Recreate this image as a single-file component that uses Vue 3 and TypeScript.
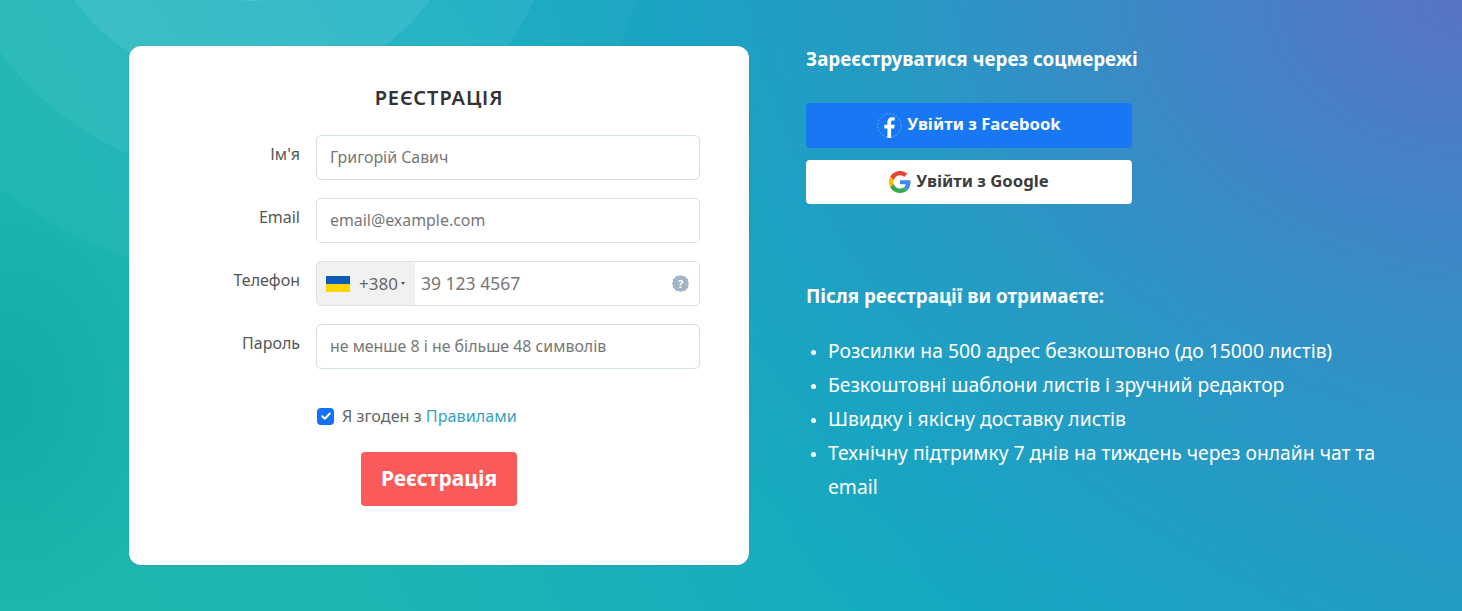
<script setup lang="ts">
import { ref } from 'vue'

const agreed = ref(true)

const fields = [
  { label: "Ім'я", placeholder: 'Григорій Савич', type: 'text' },
  { label: 'Email', placeholder: 'email@example.com', type: 'email' },
]

const benefits = [
  'Розсилки на 500 адрес безкоштовно (до 15000 листів)',
  'Безкоштовні шаблони листів і зручний редактор',
  'Швидку і якісну доставку листів',
  'Технічну підтримку 7 днів на тиждень через онлайн чат та email',
]
</script>

<template>
  <div class="page">
    <form class="card" @submit.prevent>
      <h2 class="card-title">РЕЄСТРАЦІЯ</h2>

      <div v-for="f in fields" :key="f.label" class="row">
        <label class="row-label">{{ f.label }}</label>
        <input class="input" :type="f.type" :placeholder="f.placeholder" />
      </div>

      <div class="row">
        <label class="row-label">Телефон</label>
        <div class="phone">
          <div class="dial">
            <span class="flag"></span>
            <span class="code">+380</span>
            <span class="caret"></span>
          </div>
          <input class="phone-input" type="tel" placeholder="39 123 4567" />
          <svg class="help" width="17" height="17" viewBox="0 0 17 17">
            <path
              fill="#a3b6c6"
              d="M8.5 0l2.1 1.1 2.4-.1 1.2 2 2 1.3-.1 2.3L17 8.5l-.9 2.1.1 2.3-2 1.3-1.2 2-2.4-.1L8.5 17l-2.1-1.1-2.4.1-1.2-2-2-1.3.1-2.3L0 8.5l.9-1.9-.1-2.3 2-1.3 1.2-2 2.4.1z"
            />
            <text x="8.5" y="12.6" text-anchor="middle" class="help-mark">?</text>
          </svg>
        </div>
      </div>

      <div class="row">
        <label class="row-label">Пароль</label>
        <input class="input" type="password" placeholder="не менше 8 і не більше 48 символів" />
      </div>

      <label class="agree">
        <input v-model="agreed" class="agree-input" type="checkbox" />
        <span class="box">
          <svg v-if="agreed" width="12" height="12" viewBox="0 0 12 12">
            <path d="M2.2 6.3l2.6 2.5 5-5.3" fill="none" stroke="#fff" stroke-width="2" stroke-linecap="round" stroke-linejoin="round" />
          </svg>
        </span>
        <span class="agree-text">Я згоден з <a class="rules" href="#">Правилами</a></span>
      </label>

      <div class="submit-row">
        <button class="submit" type="submit">Реєстрація</button>
      </div>
    </form>

    <div class="side">
      <h3 class="side-title">Зареєструватися через соцмережі</h3>

      <div class="socials">
        <button class="social fb" type="button">
          <svg width="25" height="25" viewBox="0 0 25 25">
            <circle cx="12.5" cy="12.5" r="11.7" fill="none" stroke="#fff" stroke-opacity=".4" stroke-width=".8" stroke-dasharray="2 1.4" />
            <path fill="#fff" d="M10.4 25v-9.6H7.3v-3.7h3.1V9c0-3.1 1.9-4.8 4.6-4.8 1.3 0 2.4.1 2.8.1v3.3h-1.9c-1.5 0-1.8.7-1.8 1.8v2.3h3.6l-.5 3.7h-3.1V25z" />
          </svg>
          <span>Увійти з Facebook</span>
        </button>
        <button class="social google" type="button">
          <svg width="22" height="22" viewBox="0 0 48 48">
            <path fill="#EA4335" d="M24 9.5c3.5 0 6.7 1.2 9.2 3.6l6.9-6.9C35.9 2.4 30.5 0 24 0 14.6 0 6.5 5.4 2.6 13.2l8 6.2C12.5 13.7 17.800 9.500 24 9.500z" />
            <path fill="#4285F4" d="M46.900 24.500c0-1.600-.1-3.100-.4-4.500H24v9h12.900c-.6 3-2.200 5.500-4.700 7.200l7.700 6c4.500-4.200 7-10.300 7-17.700z" />
            <path fill="#FBBC05" d="M10.500 28.600c-.5-1.400-.8-3-.8-4.600s.3-3.200.8-4.600l-8-6.200C.9 16.500 0 20.100 0 24s.9 7.500 2.600 10.800z" />
            <path fill="#34A853" d="M24 48c6.500 0 11.900-2.100 15.900-5.800l-7.700-6c-2.200 1.500-5 2.300-8.200 2.300-6.300 0-11.600-4.200-13.500-9.900l-8 6.200C6.500 42.600 14.600 48 24 48z" />
          </svg>
          <span>Увійти з Google</span>
        </button>
      </div>

      <h3 class="side-title after">Після реєстрації ви отримаєте:</h3>
      <ul class="benefits">
        <li v-for="b in benefits" :key="b">{{ b }}</li>
      </ul>
    </div>
  </div>
</template>

<style>
html,
body {
  margin: 0;
  overflow: hidden;
}
</style>

<style scoped>
.page {
  box-sizing: border-box;
  height: 611px;
  padding: 46px 0 0 129px;
  display: flex;
  align-items: flex-start;
  gap: 57px;
  font-family: 'Noto Sans', 'Open Sans', sans-serif;
  background:
    radial-gradient(circle 133px at 252px -132px, rgba(255, 255, 255, 0.14) 99.5%, transparent 100%),
    radial-gradient(circle 222px at 252px -132px, rgba(190, 235, 255, 0.1) 99.7%, transparent 100%),
    radial-gradient(circle 312px at 252px -132px, rgba(170, 225, 255, 0.08) 99.8%, transparent 100%),
    radial-gradient(circle 408px at 252px -132px, rgba(170, 225, 255, 0.04) 99.8%, transparent 100%),
    radial-gradient(ellipse 170px 220px at 0 400px, rgba(10, 165, 160, 0.6), transparent),
    radial-gradient(
      ellipse 1000px 760px at 100% 0,
      rgba(88, 115, 197, 1),
      rgba(88, 115, 197, 0.55) 30%,
      rgba(88, 115, 197, 0.25) 55%,
      rgba(88, 115, 197, 0)
    ),
    linear-gradient(60deg, #1cb7ad 0%, #1cb5b3 23%, #12a9c3 55%, #259bc8 100%);
}

.card {
  box-sizing: border-box;
  width: 620px;
  height: 519px;
  padding: 38px 49px 0 0;
  background: #fff;
  border-radius: 12px;
  box-shadow: 0 0 1px rgba(0, 0, 0, 0.3);
}

.card-title {
  margin: 0 0 24px 0;
  padding-left: 49px;
  text-align: center;
  font-size: 20px;
  line-height: 27px;
  letter-spacing: 0.9px;
  font-weight: 600;
  color: #333;
}

.row {
  display: flex;
  gap: 16px;
  margin-bottom: 18px;
}

.row-label {
  width: 171px;
  text-align: right;
  font-size: 16px;
  line-height: 38px;
  color: #555;
}

.input {
  box-sizing: border-box;
  width: 384px;
  height: 45px;
  padding: 0 14px 2px 13px;
  border: 1px solid #d5e3e3;
  border-radius: 5px;
  font: inherit;
  font-size: 15.9px;
  outline: none;
}

.input::placeholder,
.phone-input::placeholder {
  color: #777;
  opacity: 1;
}

.phone {
  box-sizing: border-box;
  width: 384px;
  height: 45px;
  display: flex;
  align-items: center;
  border: 1px solid #d5e3e3;
  border-radius: 5px;
  overflow: hidden;
  padding-right: 10px;
}

.dial {
  flex: none;
  width: 98px;
  height: 100%;
  box-sizing: border-box;
  padding: 0 0 1px 9px;
  display: flex;
  align-items: center;
  background: #f1f1f1;
  color: #666;
  font-size: 17px;
}

.flag {
  width: 24px;
  height: 16px;
  margin: 1px 9px 0 0;
  background: linear-gradient(#0a5ab8 50%, #ffd500 50%);
}

.caret {
  margin-left: 3px;
  border-left: 2.5px solid transparent;
  border-right: 2.5px solid transparent;
  border-top: 3px solid #555;
}

.phone-input {
  flex: 1;
  min-width: 0;
  border: 0;
  padding: 0 6px 2px;
  font: inherit;
  font-size: 17.5px;
  outline: none;
  background: transparent;
}

.help {
  flex: none;
}

.help-mark {
  font-size: 11px;
  font-weight: 700;
  fill: #fff;
}

.agree {
  position: relative;
  display: flex;
  align-items: center;
  gap: 8px;
  margin: 36px 0 0 188px;
  height: 22px;
  font-size: 16.2px;
  color: #666;
  cursor: pointer;
}

.agree-text {
  margin-top: -1px;
}

.agree-input {
  position: absolute;
  opacity: 0;
  width: 0;
  height: 0;
}

.box {
  width: 17px;
  height: 17px;
  display: flex;
  align-items: center;
  justify-content: center;
  border-radius: 4px;
  background: #1470f5;
}

.rules {
  color: #36a3bd;
  text-decoration: none;
}

.submit-row {
  display: flex;
  justify-content: center;
  margin-top: 25px;
  padding-left: 49px;
}

.submit {
  width: 156px;
  height: 54px;
  padding: 0 0 2px;
  border: 0;
  border-radius: 4px;
  background: #fb5a5a;
  color: #fff;
  font: inherit;
  font-size: 21px;
  font-weight: 700;
  cursor: pointer;
}

.side {
  width: 590px;
  color: #fff;
}

.side-title {
  margin: 0;
  font-size: 18.8px;
  line-height: 27px;
  font-weight: 700;
}

.socials {
  margin-top: 30px;
  width: 326px;
  display: flex;
  flex-direction: column;
  gap: 12px;
}

.social {
  height: 45px;
  display: flex;
  align-items: center;
  justify-content: center;
  gap: 5px;
  border: 0;
  border-radius: 4px;
  font: inherit;
  font-size: 16.7px;
  font-weight: 700;
  cursor: pointer;
}

.social span {
  margin-top: -4px;
}

.fb {
  background: #1877f2;
  color: #fff;
}

.google {
  height: 44px;
  background: #fff;
  color: #3c3c3c;
}

.after {
  margin-top: 79px;
}

.benefits {
  margin: 24px 0 0;
  padding-left: 22px;
  font-size: 19.3px;
  line-height: 34px;
}

.benefits li::marker {
  font-size: 14px;
}
</style>
